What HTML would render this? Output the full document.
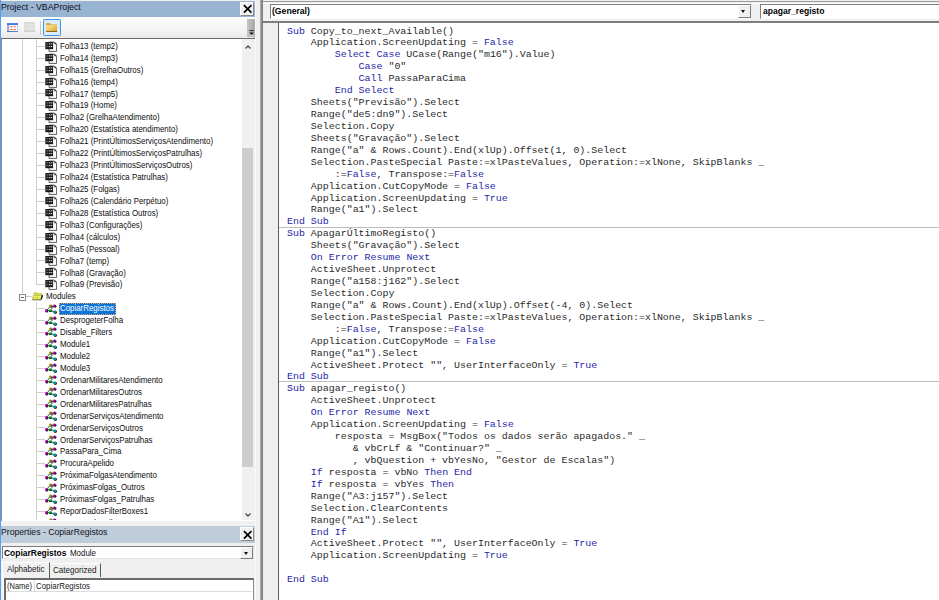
<!DOCTYPE html>
<html lang="pt"><head><meta charset="utf-8"><title>VBAProject</title>
<style>
html,body{margin:0;padding:0}
body{width:939px;height:600px;overflow:hidden;background:#f0f0f0;position:relative;font-family:"Liberation Sans",sans-serif;font-size:8.5px;color:#1a1a1a}
div,span,i{position:absolute;box-sizing:border-box}
.tx{white-space:pre;transform-origin:0 0;line-height:11px;height:11px}
#lb{left:0;top:0;width:1.3px;height:600px;background:#55a0f2}
#t1{left:1px;top:1px;width:254px;height:15.6px;background:#99b4d1}
.x{width:14.4px;height:14px;background:#f0f0f0;border-right:1px solid #8a8a8a;border-bottom:1px solid #8a8a8a;border-left:1px solid #fff;border-top:1px solid #fff}
.x svg{position:absolute;left:1.9px;top:1.4px;width:9.4px;height:9.8px}
#tb{left:1px;top:16.6px;width:254px;height:21px;background:linear-gradient(#fcfcfc,#f4f4f4 60%,#e9e9e9)}
#tree{left:0.8px;top:38.2px;width:254.2px;height:482.4px;background:#fff;border-top:1.6px solid #6a6a6a;border-left:1.2px solid #8a8a8a}
#rows{left:0;top:39px;width:242px;height:481.4px;overflow:hidden}
#rows .r{left:0;height:12px;width:242px;margin-top:-39px}
.selbg{left:59px;top:-0.5px;width:56.8px;height:12.2px;background:#0a74d9;outline:1px dotted #e8a060;outline-offset:-1px}
.r .ic{position:absolute;left:44.6px;top:0.2px;width:12px;height:12px}
.r .h{left:37px;top:5.2px;width:8px;height:1px;background:#cdcdcd}
#rows .pm{left:19px;top:3.2px;width:6.9px;height:6.7px;border:1px solid #8c8c8c;background:#fff}
#rows .pm:after{content:"";position:absolute;left:1.1px;top:1.9px;width:2.7px;height:0.9px;background:#666}
.vd{width:1px;background:#cdcdcd}
#sb{left:242px;top:39px;width:12.8px;height:481.4px;background:#f0f0f0}
#th{left:242.4px;top:148px;width:11px;height:319px;background:#cdcdcd}
#t2{left:1px;top:526px;width:254px;height:16.7px;background:#bfcddb}
#cb{left:1.5px;top:545.6px;width:252.6px;height:13.8px;background:#fff;border-top:1.2px solid #7a7a7a;border-left:1.2px solid #7a7a7a;border-bottom:1px solid #e6e6e6;border-right:1px solid #e6e6e6}
.dd{background:#f0f0f0;border-right:1px solid #7d7d7d;border-bottom:1px solid #7d7d7d;border-top:1px solid #fff;border-left:1px solid #fff}
.dd:after{content:"";position:absolute;left:50%;top:50%;margin:-1.3px 0 0 -2.9px;border:2.9px solid transparent;border-top:3px solid #111;border-bottom:0}
#code{left:279px;top:22.6px;width:660px;height:578px;background:#fff}
.cl{left:286.5px;height:12px;line-height:12px;font-family:"Liberation Mono",monospace;font-size:8.7px;white-space:pre;color:#2a2a2a;transform:scaleX(1.1444);transform-origin:0 0}
.cl b{font-weight:normal;color:#2626a8}
.sep{left:279px;width:660px;height:1.5px;background:#bdbdbd}
#cb .dd:after{margin-top:-0.5px}
</style></head><body>
<div id="lb"></div>
<div id="t1"></div>
<span class="tx" style="left:1.40px;top:1.90px;font-size:9.1px;color:#0c0c18;transform:scaleX(0.9627);">Project - VBAProject</span>
<div class="x" style="left:240px;top:1.6px"><svg viewBox="0 0 10 10"><path d="M1 1L9 9M9 1L1 9" stroke="#000" stroke-width="1.8" fill="none"/></svg></div>
<div id="tb">
 <svg style="position:absolute;left:6.2px;top:6.2px;width:11px;height:9.2px" viewBox="0 0 11 9"><rect x="0" y="0" width="11" height="9" fill="#fbfbff"/><rect x="0" y="0" width="11" height="1.9" fill="#4377e3"/><rect x="0" y="1.9" width="2.2" height="7.1" fill="#9db0d8"/><path d="M0 8.6h11" stroke="#2c4c94" stroke-width="0.9"/><path d="M10.7 1.9v7" stroke="#8aa0cc" stroke-width="0.6"/><path d="M3.3 3.7h2.4M6.7 3.7h2.2M3.3 6.4h2.4M6.7 6.4h2.2" stroke="#f0693a" stroke-width="1.1"/></svg>
 <svg style="position:absolute;left:23.2px;top:5.6px;width:11px;height:9.8px" viewBox="0 0 11 10"><rect x="0" y="0" width="11" height="10" fill="#dcdcdc"/><path d="M1.2 3.2h3M6 3.2h4M1.2 6.6h3M6 6.6h4M5.2 2v6" stroke="#ececec" stroke-width="0.9" fill="none"/><path d="M0 9.6h11" stroke="#c8c8c8" stroke-width="0.8"/></svg>
 <i style="left:39px;top:4px;width:1px;height:14px;background:#c8c8c8"></i>
 <div style="left:42.2px;top:2.5px;width:17.6px;height:17.2px;background:#dbe9f8;border:1.3px solid #3c96ea;border-radius:1.2px"></div>
 <svg style="position:absolute;left:44.7px;top:6.3px;width:11.4px;height:9.2px" viewBox="0 0 11.4 9.2"><linearGradient id="fg" x1="0" y1="0" x2="1" y2="1"><stop offset="0" stop-color="#fbe79a"/><stop offset="0.55" stop-color="#eec25a"/><stop offset="1" stop-color="#d39a2c"/></linearGradient><path d="M0 9v-8.2q0-0.8 0.8-0.8h3l1.2 1.4h6.4v7.6z" fill="#d6a53e"/><path d="M0 9v-7h11.4v7z" fill="url(#fg)"/><path d="M0 8.7h11.4" stroke="#6e5420" stroke-width="1"/></svg>
 <div style="left:246px;top:2px;width:9px;height:18px;background:linear-gradient(90deg,#c4c4c4,#a4a4a4);border-radius:0 2px 2px 0"></div>
 <svg style="position:absolute;left:247.8px;top:13px;width:5px;height:6px" viewBox="0 0 5 6"><path d="M0.3 0.6h4.4" stroke="#222" stroke-width="1"/><path d="M0.2 2.4h4.6L2.5 5z" fill="#111"/><path d="M0.8 5.6h4" stroke="#fff" stroke-width="0.6"/></svg>
</div>
<div id="tree"></div>
<div id="rows">
 <i class="vd" style="left:22.1px;top:0;height:253.9px"></i>
 <i class="vd" style="left:36.1px;top:0;height:246px"></i>
 <i class="vd" style="left:36.1px;top:263.2px;height:220px"></i>
<div class="r" style="top:40.55px"><i class="h"></i><svg class="ic" viewBox="0 0 12 12"><path d="M4 1.1h5.6l2 2v7.3h-7.6z" fill="#fff" stroke="#4a4a4a" stroke-width="0.9"/><path d="M9.4 1v2.2h2.2z" fill="#222"/><rect x="0.3" y="1" width="7.8" height="7.2" fill="#1c1c1c"/><path d="M1.2 2.9h2M1.2 5.6h2" stroke="#8a8a8a" stroke-width="0.8" fill="none"/><path d="M3.9 2.9h1.5M6 2.9h1.2M3.9 5.6h1.5M6 5.6h1.2" stroke="#fff" stroke-width="0.9" fill="none"/></svg><span class="tx t" style="left:59.60px;top:0.30px;font-size:8.7px;color:#0c0c0c;transform:scaleX(0.908);">Folha13 (temp2)</span></div>
<div class="r" style="top:52.48px"><i class="h"></i><svg class="ic" viewBox="0 0 12 12"><path d="M4 1.1h5.6l2 2v7.3h-7.6z" fill="#fff" stroke="#4a4a4a" stroke-width="0.9"/><path d="M9.4 1v2.2h2.2z" fill="#222"/><rect x="0.3" y="1" width="7.8" height="7.2" fill="#1c1c1c"/><path d="M1.2 2.9h2M1.2 5.6h2" stroke="#8a8a8a" stroke-width="0.8" fill="none"/><path d="M3.9 2.9h1.5M6 2.9h1.2M3.9 5.6h1.5M6 5.6h1.2" stroke="#fff" stroke-width="0.9" fill="none"/></svg><span class="tx t" style="left:59.60px;top:0.30px;font-size:8.7px;color:#0c0c0c;transform:scaleX(0.908);">Folha14 (temp3)</span></div>
<div class="r" style="top:64.41px"><i class="h"></i><svg class="ic" viewBox="0 0 12 12"><path d="M4 1.1h5.6l2 2v7.3h-7.6z" fill="#fff" stroke="#4a4a4a" stroke-width="0.9"/><path d="M9.4 1v2.2h2.2z" fill="#222"/><rect x="0.3" y="1" width="7.8" height="7.2" fill="#1c1c1c"/><path d="M1.2 2.9h2M1.2 5.6h2" stroke="#8a8a8a" stroke-width="0.8" fill="none"/><path d="M3.9 2.9h1.5M6 2.9h1.2M3.9 5.6h1.5M6 5.6h1.2" stroke="#fff" stroke-width="0.9" fill="none"/></svg><span class="tx t" style="left:59.60px;top:0.30px;font-size:8.7px;color:#0c0c0c;transform:scaleX(0.908);">Folha15 (GrelhaOutros)</span></div>
<div class="r" style="top:76.34px"><i class="h"></i><svg class="ic" viewBox="0 0 12 12"><path d="M4 1.1h5.6l2 2v7.3h-7.6z" fill="#fff" stroke="#4a4a4a" stroke-width="0.9"/><path d="M9.4 1v2.2h2.2z" fill="#222"/><rect x="0.3" y="1" width="7.8" height="7.2" fill="#1c1c1c"/><path d="M1.2 2.9h2M1.2 5.6h2" stroke="#8a8a8a" stroke-width="0.8" fill="none"/><path d="M3.9 2.9h1.5M6 2.9h1.2M3.9 5.6h1.5M6 5.6h1.2" stroke="#fff" stroke-width="0.9" fill="none"/></svg><span class="tx t" style="left:59.60px;top:0.30px;font-size:8.7px;color:#0c0c0c;transform:scaleX(0.908);">Folha16 (temp4)</span></div>
<div class="r" style="top:88.27px"><i class="h"></i><svg class="ic" viewBox="0 0 12 12"><path d="M4 1.1h5.6l2 2v7.3h-7.6z" fill="#fff" stroke="#4a4a4a" stroke-width="0.9"/><path d="M9.4 1v2.2h2.2z" fill="#222"/><rect x="0.3" y="1" width="7.8" height="7.2" fill="#1c1c1c"/><path d="M1.2 2.9h2M1.2 5.6h2" stroke="#8a8a8a" stroke-width="0.8" fill="none"/><path d="M3.9 2.9h1.5M6 2.9h1.2M3.9 5.6h1.5M6 5.6h1.2" stroke="#fff" stroke-width="0.9" fill="none"/></svg><span class="tx t" style="left:59.60px;top:0.30px;font-size:8.7px;color:#0c0c0c;transform:scaleX(0.908);">Folha17 (temp5)</span></div>
<div class="r" style="top:100.20px"><i class="h"></i><svg class="ic" viewBox="0 0 12 12"><path d="M4 1.1h5.6l2 2v7.3h-7.6z" fill="#fff" stroke="#4a4a4a" stroke-width="0.9"/><path d="M9.4 1v2.2h2.2z" fill="#222"/><rect x="0.3" y="1" width="7.8" height="7.2" fill="#1c1c1c"/><path d="M1.2 2.9h2M1.2 5.6h2" stroke="#8a8a8a" stroke-width="0.8" fill="none"/><path d="M3.9 2.9h1.5M6 2.9h1.2M3.9 5.6h1.5M6 5.6h1.2" stroke="#fff" stroke-width="0.9" fill="none"/></svg><span class="tx t" style="left:59.60px;top:0.30px;font-size:8.7px;color:#0c0c0c;transform:scaleX(0.908);">Folha19 (Home)</span></div>
<div class="r" style="top:112.13px"><i class="h"></i><svg class="ic" viewBox="0 0 12 12"><path d="M4 1.1h5.6l2 2v7.3h-7.6z" fill="#fff" stroke="#4a4a4a" stroke-width="0.9"/><path d="M9.4 1v2.2h2.2z" fill="#222"/><rect x="0.3" y="1" width="7.8" height="7.2" fill="#1c1c1c"/><path d="M1.2 2.9h2M1.2 5.6h2" stroke="#8a8a8a" stroke-width="0.8" fill="none"/><path d="M3.9 2.9h1.5M6 2.9h1.2M3.9 5.6h1.5M6 5.6h1.2" stroke="#fff" stroke-width="0.9" fill="none"/></svg><span class="tx t" style="left:59.60px;top:0.30px;font-size:8.7px;color:#0c0c0c;transform:scaleX(0.908);">Folha2 (GrelhaAtendimento)</span></div>
<div class="r" style="top:124.06px"><i class="h"></i><svg class="ic" viewBox="0 0 12 12"><path d="M4 1.1h5.6l2 2v7.3h-7.6z" fill="#fff" stroke="#4a4a4a" stroke-width="0.9"/><path d="M9.4 1v2.2h2.2z" fill="#222"/><rect x="0.3" y="1" width="7.8" height="7.2" fill="#1c1c1c"/><path d="M1.2 2.9h2M1.2 5.6h2" stroke="#8a8a8a" stroke-width="0.8" fill="none"/><path d="M3.9 2.9h1.5M6 2.9h1.2M3.9 5.6h1.5M6 5.6h1.2" stroke="#fff" stroke-width="0.9" fill="none"/></svg><span class="tx t" style="left:59.60px;top:0.30px;font-size:8.7px;color:#0c0c0c;transform:scaleX(0.908);">Folha20 (Estatística atendimento)</span></div>
<div class="r" style="top:135.99px"><i class="h"></i><svg class="ic" viewBox="0 0 12 12"><path d="M4 1.1h5.6l2 2v7.3h-7.6z" fill="#fff" stroke="#4a4a4a" stroke-width="0.9"/><path d="M9.4 1v2.2h2.2z" fill="#222"/><rect x="0.3" y="1" width="7.8" height="7.2" fill="#1c1c1c"/><path d="M1.2 2.9h2M1.2 5.6h2" stroke="#8a8a8a" stroke-width="0.8" fill="none"/><path d="M3.9 2.9h1.5M6 2.9h1.2M3.9 5.6h1.5M6 5.6h1.2" stroke="#fff" stroke-width="0.9" fill="none"/></svg><span class="tx t" style="left:59.60px;top:0.30px;font-size:8.7px;color:#0c0c0c;transform:scaleX(0.908);">Folha21 (PrintÚltimosServiçosAtendimento)</span></div>
<div class="r" style="top:147.92px"><i class="h"></i><svg class="ic" viewBox="0 0 12 12"><path d="M4 1.1h5.6l2 2v7.3h-7.6z" fill="#fff" stroke="#4a4a4a" stroke-width="0.9"/><path d="M9.4 1v2.2h2.2z" fill="#222"/><rect x="0.3" y="1" width="7.8" height="7.2" fill="#1c1c1c"/><path d="M1.2 2.9h2M1.2 5.6h2" stroke="#8a8a8a" stroke-width="0.8" fill="none"/><path d="M3.9 2.9h1.5M6 2.9h1.2M3.9 5.6h1.5M6 5.6h1.2" stroke="#fff" stroke-width="0.9" fill="none"/></svg><span class="tx t" style="left:59.60px;top:0.30px;font-size:8.7px;color:#0c0c0c;transform:scaleX(0.908);">Folha22 (PrintÚltimosServiçosPatrulhas)</span></div>
<div class="r" style="top:159.85px"><i class="h"></i><svg class="ic" viewBox="0 0 12 12"><path d="M4 1.1h5.6l2 2v7.3h-7.6z" fill="#fff" stroke="#4a4a4a" stroke-width="0.9"/><path d="M9.4 1v2.2h2.2z" fill="#222"/><rect x="0.3" y="1" width="7.8" height="7.2" fill="#1c1c1c"/><path d="M1.2 2.9h2M1.2 5.6h2" stroke="#8a8a8a" stroke-width="0.8" fill="none"/><path d="M3.9 2.9h1.5M6 2.9h1.2M3.9 5.6h1.5M6 5.6h1.2" stroke="#fff" stroke-width="0.9" fill="none"/></svg><span class="tx t" style="left:59.60px;top:0.30px;font-size:8.7px;color:#0c0c0c;transform:scaleX(0.908);">Folha23 (PrintÚltimosServiçosOutros)</span></div>
<div class="r" style="top:171.78px"><i class="h"></i><svg class="ic" viewBox="0 0 12 12"><path d="M4 1.1h5.6l2 2v7.3h-7.6z" fill="#fff" stroke="#4a4a4a" stroke-width="0.9"/><path d="M9.4 1v2.2h2.2z" fill="#222"/><rect x="0.3" y="1" width="7.8" height="7.2" fill="#1c1c1c"/><path d="M1.2 2.9h2M1.2 5.6h2" stroke="#8a8a8a" stroke-width="0.8" fill="none"/><path d="M3.9 2.9h1.5M6 2.9h1.2M3.9 5.6h1.5M6 5.6h1.2" stroke="#fff" stroke-width="0.9" fill="none"/></svg><span class="tx t" style="left:59.60px;top:0.30px;font-size:8.7px;color:#0c0c0c;transform:scaleX(0.908);">Folha24 (Estatística Patrulhas)</span></div>
<div class="r" style="top:183.71px"><i class="h"></i><svg class="ic" viewBox="0 0 12 12"><path d="M4 1.1h5.6l2 2v7.3h-7.6z" fill="#fff" stroke="#4a4a4a" stroke-width="0.9"/><path d="M9.4 1v2.2h2.2z" fill="#222"/><rect x="0.3" y="1" width="7.8" height="7.2" fill="#1c1c1c"/><path d="M1.2 2.9h2M1.2 5.6h2" stroke="#8a8a8a" stroke-width="0.8" fill="none"/><path d="M3.9 2.9h1.5M6 2.9h1.2M3.9 5.6h1.5M6 5.6h1.2" stroke="#fff" stroke-width="0.9" fill="none"/></svg><span class="tx t" style="left:59.60px;top:0.30px;font-size:8.7px;color:#0c0c0c;transform:scaleX(0.908);">Folha25 (Folgas)</span></div>
<div class="r" style="top:195.64px"><i class="h"></i><svg class="ic" viewBox="0 0 12 12"><path d="M4 1.1h5.6l2 2v7.3h-7.6z" fill="#fff" stroke="#4a4a4a" stroke-width="0.9"/><path d="M9.4 1v2.2h2.2z" fill="#222"/><rect x="0.3" y="1" width="7.8" height="7.2" fill="#1c1c1c"/><path d="M1.2 2.9h2M1.2 5.6h2" stroke="#8a8a8a" stroke-width="0.8" fill="none"/><path d="M3.9 2.9h1.5M6 2.9h1.2M3.9 5.6h1.5M6 5.6h1.2" stroke="#fff" stroke-width="0.9" fill="none"/></svg><span class="tx t" style="left:59.60px;top:0.30px;font-size:8.7px;color:#0c0c0c;transform:scaleX(0.908);">Folha26 (Calendário Perpétuo)</span></div>
<div class="r" style="top:207.57px"><i class="h"></i><svg class="ic" viewBox="0 0 12 12"><path d="M4 1.1h5.6l2 2v7.3h-7.6z" fill="#fff" stroke="#4a4a4a" stroke-width="0.9"/><path d="M9.4 1v2.2h2.2z" fill="#222"/><rect x="0.3" y="1" width="7.8" height="7.2" fill="#1c1c1c"/><path d="M1.2 2.9h2M1.2 5.6h2" stroke="#8a8a8a" stroke-width="0.8" fill="none"/><path d="M3.9 2.9h1.5M6 2.9h1.2M3.9 5.6h1.5M6 5.6h1.2" stroke="#fff" stroke-width="0.9" fill="none"/></svg><span class="tx t" style="left:59.60px;top:0.30px;font-size:8.7px;color:#0c0c0c;transform:scaleX(0.908);">Folha28 (Estatística Outros)</span></div>
<div class="r" style="top:219.50px"><i class="h"></i><svg class="ic" viewBox="0 0 12 12"><path d="M4 1.1h5.6l2 2v7.3h-7.6z" fill="#fff" stroke="#4a4a4a" stroke-width="0.9"/><path d="M9.4 1v2.2h2.2z" fill="#222"/><rect x="0.3" y="1" width="7.8" height="7.2" fill="#1c1c1c"/><path d="M1.2 2.9h2M1.2 5.6h2" stroke="#8a8a8a" stroke-width="0.8" fill="none"/><path d="M3.9 2.9h1.5M6 2.9h1.2M3.9 5.6h1.5M6 5.6h1.2" stroke="#fff" stroke-width="0.9" fill="none"/></svg><span class="tx t" style="left:59.60px;top:0.30px;font-size:8.7px;color:#0c0c0c;transform:scaleX(0.908);">Folha3 (Configurações)</span></div>
<div class="r" style="top:231.43px"><i class="h"></i><svg class="ic" viewBox="0 0 12 12"><path d="M4 1.1h5.6l2 2v7.3h-7.6z" fill="#fff" stroke="#4a4a4a" stroke-width="0.9"/><path d="M9.4 1v2.2h2.2z" fill="#222"/><rect x="0.3" y="1" width="7.8" height="7.2" fill="#1c1c1c"/><path d="M1.2 2.9h2M1.2 5.6h2" stroke="#8a8a8a" stroke-width="0.8" fill="none"/><path d="M3.9 2.9h1.5M6 2.9h1.2M3.9 5.6h1.5M6 5.6h1.2" stroke="#fff" stroke-width="0.9" fill="none"/></svg><span class="tx t" style="left:59.60px;top:0.30px;font-size:8.7px;color:#0c0c0c;transform:scaleX(0.908);">Folha4 (cálculos)</span></div>
<div class="r" style="top:243.36px"><i class="h"></i><svg class="ic" viewBox="0 0 12 12"><path d="M4 1.1h5.6l2 2v7.3h-7.6z" fill="#fff" stroke="#4a4a4a" stroke-width="0.9"/><path d="M9.4 1v2.2h2.2z" fill="#222"/><rect x="0.3" y="1" width="7.8" height="7.2" fill="#1c1c1c"/><path d="M1.2 2.9h2M1.2 5.6h2" stroke="#8a8a8a" stroke-width="0.8" fill="none"/><path d="M3.9 2.9h1.5M6 2.9h1.2M3.9 5.6h1.5M6 5.6h1.2" stroke="#fff" stroke-width="0.9" fill="none"/></svg><span class="tx t" style="left:59.60px;top:0.30px;font-size:8.7px;color:#0c0c0c;transform:scaleX(0.908);">Folha5 (Pessoal)</span></div>
<div class="r" style="top:255.29px"><i class="h"></i><svg class="ic" viewBox="0 0 12 12"><path d="M4 1.1h5.6l2 2v7.3h-7.6z" fill="#fff" stroke="#4a4a4a" stroke-width="0.9"/><path d="M9.4 1v2.2h2.2z" fill="#222"/><rect x="0.3" y="1" width="7.8" height="7.2" fill="#1c1c1c"/><path d="M1.2 2.9h2M1.2 5.6h2" stroke="#8a8a8a" stroke-width="0.8" fill="none"/><path d="M3.9 2.9h1.5M6 2.9h1.2M3.9 5.6h1.5M6 5.6h1.2" stroke="#fff" stroke-width="0.9" fill="none"/></svg><span class="tx t" style="left:59.60px;top:0.30px;font-size:8.7px;color:#0c0c0c;transform:scaleX(0.908);">Folha7 (temp)</span></div>
<div class="r" style="top:267.22px"><i class="h"></i><svg class="ic" viewBox="0 0 12 12"><path d="M4 1.1h5.6l2 2v7.3h-7.6z" fill="#fff" stroke="#4a4a4a" stroke-width="0.9"/><path d="M9.4 1v2.2h2.2z" fill="#222"/><rect x="0.3" y="1" width="7.8" height="7.2" fill="#1c1c1c"/><path d="M1.2 2.9h2M1.2 5.6h2" stroke="#8a8a8a" stroke-width="0.8" fill="none"/><path d="M3.9 2.9h1.5M6 2.9h1.2M3.9 5.6h1.5M6 5.6h1.2" stroke="#fff" stroke-width="0.9" fill="none"/></svg><span class="tx t" style="left:59.60px;top:0.30px;font-size:8.7px;color:#0c0c0c;transform:scaleX(0.908);">Folha8 (Gravação)</span></div>
<div class="r" style="top:279.15px"><i class="h"></i><svg class="ic" viewBox="0 0 12 12"><path d="M4 1.1h5.6l2 2v7.3h-7.6z" fill="#fff" stroke="#4a4a4a" stroke-width="0.9"/><path d="M9.4 1v2.2h2.2z" fill="#222"/><rect x="0.3" y="1" width="7.8" height="7.2" fill="#1c1c1c"/><path d="M1.2 2.9h2M1.2 5.6h2" stroke="#8a8a8a" stroke-width="0.8" fill="none"/><path d="M3.9 2.9h1.5M6 2.9h1.2M3.9 5.6h1.5M6 5.6h1.2" stroke="#fff" stroke-width="0.9" fill="none"/></svg><span class="tx t" style="left:59.60px;top:0.30px;font-size:8.7px;color:#0c0c0c;transform:scaleX(0.908);">Folha9 (Previsão)</span></div>
<div class="r" style="top:291.08px"><i class="h" style="left:26px;width:6px"></i><i class="pm"></i><svg class="ic" style="left:31.8px;top:0.4px;width:11px;height:11px" viewBox="0 0 11 11"><path d="M1.2 3.2l0.8-1.4h3l0.8 1h4v2.4" fill="#e4e455" stroke="#b8b84a" stroke-width="0.7"/><path d="M0.4 8.6l1-4.2h8.8l-1.2 4.2z" fill="#f0f060" stroke="#a0a040" stroke-width="0.7"/><path d="M9.2 8.4l1.3-4.2" stroke="#111" stroke-width="1.3"/><path d="M0.6 8.9h8.6" stroke="#555" stroke-width="0.7"/><path d="M2.6 3h2.6M2.4 6.6h4.6" stroke="#c4c040" stroke-width="0.9"/></svg><span class="tx t" style="left:46.00px;top:0.30px;font-size:8.7px;color:#0c0c0c;transform:scaleX(0.908);">Modules</span></div>
<div class="r" style="top:303.01px"><i class="h"></i><svg class="ic" style="top:0.6px" viewBox="0 0 12 12"><path d="M1.4 6.5L5.8 1.8M1.4 6.5L5 6.5M5 6.5L9.6 1.8M5 6.5L10 7.9" stroke="#2a2a2a" stroke-width="0.85" fill="none"/><g fill="#000"><ellipse cx="6.2" cy="2.3" rx="1.4" ry="1.4"/><ellipse cx="10" cy="2.3" rx="1.4" ry="1.4"/><ellipse cx="1.8" cy="7" rx="1.4" ry="1.6"/><ellipse cx="5.3" cy="7" rx="1.6" ry="1.1"/><ellipse cx="10.3" cy="8.4" rx="1.6" ry="1.3"/></g><ellipse cx="5.7" cy="1.8" rx="1.35" ry="1.35" fill="#8c8c00"/><ellipse cx="9.5" cy="1.8" rx="1.35" ry="1.35" fill="#a800a8"/><ellipse cx="1.35" cy="6.5" rx="1.35" ry="1.6" fill="#b000b0"/><ellipse cx="4.8" cy="6.5" rx="1.6" ry="1.1" fill="#00b020"/><ellipse cx="9.8" cy="7.9" rx="1.6" ry="1.3" fill="#009090"/></svg><i class="selbg"></i><span class="tx t" style="left:59.60px;top:0.30px;font-size:8.7px;color:#fff;transform:scaleX(0.908);">CopiarRegistos</span></div>
<div class="r" style="top:314.94px"><i class="h"></i><svg class="ic" style="top:0.6px" viewBox="0 0 12 12"><path d="M1.4 6.5L5.8 1.8M1.4 6.5L5 6.5M5 6.5L9.6 1.8M5 6.5L10 7.9" stroke="#2a2a2a" stroke-width="0.85" fill="none"/><g fill="#000"><ellipse cx="6.2" cy="2.3" rx="1.4" ry="1.4"/><ellipse cx="10" cy="2.3" rx="1.4" ry="1.4"/><ellipse cx="1.8" cy="7" rx="1.4" ry="1.6"/><ellipse cx="5.3" cy="7" rx="1.6" ry="1.1"/><ellipse cx="10.3" cy="8.4" rx="1.6" ry="1.3"/></g><ellipse cx="5.7" cy="1.8" rx="1.35" ry="1.35" fill="#8c8c00"/><ellipse cx="9.5" cy="1.8" rx="1.35" ry="1.35" fill="#a800a8"/><ellipse cx="1.35" cy="6.5" rx="1.35" ry="1.6" fill="#b000b0"/><ellipse cx="4.8" cy="6.5" rx="1.6" ry="1.1" fill="#00b020"/><ellipse cx="9.8" cy="7.9" rx="1.6" ry="1.3" fill="#009090"/></svg><span class="tx t" style="left:59.60px;top:0.30px;font-size:8.7px;color:#0c0c0c;transform:scaleX(0.908);">DesprogeterFolha</span></div>
<div class="r" style="top:326.87px"><i class="h"></i><svg class="ic" style="top:0.6px" viewBox="0 0 12 12"><path d="M1.4 6.5L5.8 1.8M1.4 6.5L5 6.5M5 6.5L9.6 1.8M5 6.5L10 7.9" stroke="#2a2a2a" stroke-width="0.85" fill="none"/><g fill="#000"><ellipse cx="6.2" cy="2.3" rx="1.4" ry="1.4"/><ellipse cx="10" cy="2.3" rx="1.4" ry="1.4"/><ellipse cx="1.8" cy="7" rx="1.4" ry="1.6"/><ellipse cx="5.3" cy="7" rx="1.6" ry="1.1"/><ellipse cx="10.3" cy="8.4" rx="1.6" ry="1.3"/></g><ellipse cx="5.7" cy="1.8" rx="1.35" ry="1.35" fill="#8c8c00"/><ellipse cx="9.5" cy="1.8" rx="1.35" ry="1.35" fill="#a800a8"/><ellipse cx="1.35" cy="6.5" rx="1.35" ry="1.6" fill="#b000b0"/><ellipse cx="4.8" cy="6.5" rx="1.6" ry="1.1" fill="#00b020"/><ellipse cx="9.8" cy="7.9" rx="1.6" ry="1.3" fill="#009090"/></svg><span class="tx t" style="left:59.60px;top:0.30px;font-size:8.7px;color:#0c0c0c;transform:scaleX(0.908);">Disable_Filters</span></div>
<div class="r" style="top:338.80px"><i class="h"></i><svg class="ic" style="top:0.6px" viewBox="0 0 12 12"><path d="M1.4 6.5L5.8 1.8M1.4 6.5L5 6.5M5 6.5L9.6 1.8M5 6.5L10 7.9" stroke="#2a2a2a" stroke-width="0.85" fill="none"/><g fill="#000"><ellipse cx="6.2" cy="2.3" rx="1.4" ry="1.4"/><ellipse cx="10" cy="2.3" rx="1.4" ry="1.4"/><ellipse cx="1.8" cy="7" rx="1.4" ry="1.6"/><ellipse cx="5.3" cy="7" rx="1.6" ry="1.1"/><ellipse cx="10.3" cy="8.4" rx="1.6" ry="1.3"/></g><ellipse cx="5.7" cy="1.8" rx="1.35" ry="1.35" fill="#8c8c00"/><ellipse cx="9.5" cy="1.8" rx="1.35" ry="1.35" fill="#a800a8"/><ellipse cx="1.35" cy="6.5" rx="1.35" ry="1.6" fill="#b000b0"/><ellipse cx="4.8" cy="6.5" rx="1.6" ry="1.1" fill="#00b020"/><ellipse cx="9.8" cy="7.9" rx="1.6" ry="1.3" fill="#009090"/></svg><span class="tx t" style="left:59.60px;top:0.30px;font-size:8.7px;color:#0c0c0c;transform:scaleX(0.908);">Module1</span></div>
<div class="r" style="top:350.73px"><i class="h"></i><svg class="ic" style="top:0.6px" viewBox="0 0 12 12"><path d="M1.4 6.5L5.8 1.8M1.4 6.5L5 6.5M5 6.5L9.6 1.8M5 6.5L10 7.9" stroke="#2a2a2a" stroke-width="0.85" fill="none"/><g fill="#000"><ellipse cx="6.2" cy="2.3" rx="1.4" ry="1.4"/><ellipse cx="10" cy="2.3" rx="1.4" ry="1.4"/><ellipse cx="1.8" cy="7" rx="1.4" ry="1.6"/><ellipse cx="5.3" cy="7" rx="1.6" ry="1.1"/><ellipse cx="10.3" cy="8.4" rx="1.6" ry="1.3"/></g><ellipse cx="5.7" cy="1.8" rx="1.35" ry="1.35" fill="#8c8c00"/><ellipse cx="9.5" cy="1.8" rx="1.35" ry="1.35" fill="#a800a8"/><ellipse cx="1.35" cy="6.5" rx="1.35" ry="1.6" fill="#b000b0"/><ellipse cx="4.8" cy="6.5" rx="1.6" ry="1.1" fill="#00b020"/><ellipse cx="9.8" cy="7.9" rx="1.6" ry="1.3" fill="#009090"/></svg><span class="tx t" style="left:59.60px;top:0.30px;font-size:8.7px;color:#0c0c0c;transform:scaleX(0.908);">Module2</span></div>
<div class="r" style="top:362.66px"><i class="h"></i><svg class="ic" style="top:0.6px" viewBox="0 0 12 12"><path d="M1.4 6.5L5.8 1.8M1.4 6.5L5 6.5M5 6.5L9.6 1.8M5 6.5L10 7.9" stroke="#2a2a2a" stroke-width="0.85" fill="none"/><g fill="#000"><ellipse cx="6.2" cy="2.3" rx="1.4" ry="1.4"/><ellipse cx="10" cy="2.3" rx="1.4" ry="1.4"/><ellipse cx="1.8" cy="7" rx="1.4" ry="1.6"/><ellipse cx="5.3" cy="7" rx="1.6" ry="1.1"/><ellipse cx="10.3" cy="8.4" rx="1.6" ry="1.3"/></g><ellipse cx="5.7" cy="1.8" rx="1.35" ry="1.35" fill="#8c8c00"/><ellipse cx="9.5" cy="1.8" rx="1.35" ry="1.35" fill="#a800a8"/><ellipse cx="1.35" cy="6.5" rx="1.35" ry="1.6" fill="#b000b0"/><ellipse cx="4.8" cy="6.5" rx="1.6" ry="1.1" fill="#00b020"/><ellipse cx="9.8" cy="7.9" rx="1.6" ry="1.3" fill="#009090"/></svg><span class="tx t" style="left:59.60px;top:0.30px;font-size:8.7px;color:#0c0c0c;transform:scaleX(0.908);">Module3</span></div>
<div class="r" style="top:374.59px"><i class="h"></i><svg class="ic" style="top:0.6px" viewBox="0 0 12 12"><path d="M1.4 6.5L5.8 1.8M1.4 6.5L5 6.5M5 6.5L9.6 1.8M5 6.5L10 7.9" stroke="#2a2a2a" stroke-width="0.85" fill="none"/><g fill="#000"><ellipse cx="6.2" cy="2.3" rx="1.4" ry="1.4"/><ellipse cx="10" cy="2.3" rx="1.4" ry="1.4"/><ellipse cx="1.8" cy="7" rx="1.4" ry="1.6"/><ellipse cx="5.3" cy="7" rx="1.6" ry="1.1"/><ellipse cx="10.3" cy="8.4" rx="1.6" ry="1.3"/></g><ellipse cx="5.7" cy="1.8" rx="1.35" ry="1.35" fill="#8c8c00"/><ellipse cx="9.5" cy="1.8" rx="1.35" ry="1.35" fill="#a800a8"/><ellipse cx="1.35" cy="6.5" rx="1.35" ry="1.6" fill="#b000b0"/><ellipse cx="4.8" cy="6.5" rx="1.6" ry="1.1" fill="#00b020"/><ellipse cx="9.8" cy="7.9" rx="1.6" ry="1.3" fill="#009090"/></svg><span class="tx t" style="left:59.60px;top:0.30px;font-size:8.7px;color:#0c0c0c;transform:scaleX(0.908);">OrdenarMilitaresAtendimento</span></div>
<div class="r" style="top:386.52px"><i class="h"></i><svg class="ic" style="top:0.6px" viewBox="0 0 12 12"><path d="M1.4 6.5L5.8 1.8M1.4 6.5L5 6.5M5 6.5L9.6 1.8M5 6.5L10 7.9" stroke="#2a2a2a" stroke-width="0.85" fill="none"/><g fill="#000"><ellipse cx="6.2" cy="2.3" rx="1.4" ry="1.4"/><ellipse cx="10" cy="2.3" rx="1.4" ry="1.4"/><ellipse cx="1.8" cy="7" rx="1.4" ry="1.6"/><ellipse cx="5.3" cy="7" rx="1.6" ry="1.1"/><ellipse cx="10.3" cy="8.4" rx="1.6" ry="1.3"/></g><ellipse cx="5.7" cy="1.8" rx="1.35" ry="1.35" fill="#8c8c00"/><ellipse cx="9.5" cy="1.8" rx="1.35" ry="1.35" fill="#a800a8"/><ellipse cx="1.35" cy="6.5" rx="1.35" ry="1.6" fill="#b000b0"/><ellipse cx="4.8" cy="6.5" rx="1.6" ry="1.1" fill="#00b020"/><ellipse cx="9.8" cy="7.9" rx="1.6" ry="1.3" fill="#009090"/></svg><span class="tx t" style="left:59.60px;top:0.30px;font-size:8.7px;color:#0c0c0c;transform:scaleX(0.908);">OrdenarMilitaresOutros</span></div>
<div class="r" style="top:398.45px"><i class="h"></i><svg class="ic" style="top:0.6px" viewBox="0 0 12 12"><path d="M1.4 6.5L5.8 1.8M1.4 6.5L5 6.5M5 6.5L9.6 1.8M5 6.5L10 7.9" stroke="#2a2a2a" stroke-width="0.85" fill="none"/><g fill="#000"><ellipse cx="6.2" cy="2.3" rx="1.4" ry="1.4"/><ellipse cx="10" cy="2.3" rx="1.4" ry="1.4"/><ellipse cx="1.8" cy="7" rx="1.4" ry="1.6"/><ellipse cx="5.3" cy="7" rx="1.6" ry="1.1"/><ellipse cx="10.3" cy="8.4" rx="1.6" ry="1.3"/></g><ellipse cx="5.7" cy="1.8" rx="1.35" ry="1.35" fill="#8c8c00"/><ellipse cx="9.5" cy="1.8" rx="1.35" ry="1.35" fill="#a800a8"/><ellipse cx="1.35" cy="6.5" rx="1.35" ry="1.6" fill="#b000b0"/><ellipse cx="4.8" cy="6.5" rx="1.6" ry="1.1" fill="#00b020"/><ellipse cx="9.8" cy="7.9" rx="1.6" ry="1.3" fill="#009090"/></svg><span class="tx t" style="left:59.60px;top:0.30px;font-size:8.7px;color:#0c0c0c;transform:scaleX(0.908);">OrdenarMilitaresPatrulhas</span></div>
<div class="r" style="top:410.38px"><i class="h"></i><svg class="ic" style="top:0.6px" viewBox="0 0 12 12"><path d="M1.4 6.5L5.8 1.8M1.4 6.5L5 6.5M5 6.5L9.6 1.8M5 6.5L10 7.9" stroke="#2a2a2a" stroke-width="0.85" fill="none"/><g fill="#000"><ellipse cx="6.2" cy="2.3" rx="1.4" ry="1.4"/><ellipse cx="10" cy="2.3" rx="1.4" ry="1.4"/><ellipse cx="1.8" cy="7" rx="1.4" ry="1.6"/><ellipse cx="5.3" cy="7" rx="1.6" ry="1.1"/><ellipse cx="10.3" cy="8.4" rx="1.6" ry="1.3"/></g><ellipse cx="5.7" cy="1.8" rx="1.35" ry="1.35" fill="#8c8c00"/><ellipse cx="9.5" cy="1.8" rx="1.35" ry="1.35" fill="#a800a8"/><ellipse cx="1.35" cy="6.5" rx="1.35" ry="1.6" fill="#b000b0"/><ellipse cx="4.8" cy="6.5" rx="1.6" ry="1.1" fill="#00b020"/><ellipse cx="9.8" cy="7.9" rx="1.6" ry="1.3" fill="#009090"/></svg><span class="tx t" style="left:59.60px;top:0.30px;font-size:8.7px;color:#0c0c0c;transform:scaleX(0.908);">OrdenarServiçosAtendimento</span></div>
<div class="r" style="top:422.31px"><i class="h"></i><svg class="ic" style="top:0.6px" viewBox="0 0 12 12"><path d="M1.4 6.5L5.8 1.8M1.4 6.5L5 6.5M5 6.5L9.6 1.8M5 6.5L10 7.9" stroke="#2a2a2a" stroke-width="0.85" fill="none"/><g fill="#000"><ellipse cx="6.2" cy="2.3" rx="1.4" ry="1.4"/><ellipse cx="10" cy="2.3" rx="1.4" ry="1.4"/><ellipse cx="1.8" cy="7" rx="1.4" ry="1.6"/><ellipse cx="5.3" cy="7" rx="1.6" ry="1.1"/><ellipse cx="10.3" cy="8.4" rx="1.6" ry="1.3"/></g><ellipse cx="5.7" cy="1.8" rx="1.35" ry="1.35" fill="#8c8c00"/><ellipse cx="9.5" cy="1.8" rx="1.35" ry="1.35" fill="#a800a8"/><ellipse cx="1.35" cy="6.5" rx="1.35" ry="1.6" fill="#b000b0"/><ellipse cx="4.8" cy="6.5" rx="1.6" ry="1.1" fill="#00b020"/><ellipse cx="9.8" cy="7.9" rx="1.6" ry="1.3" fill="#009090"/></svg><span class="tx t" style="left:59.60px;top:0.30px;font-size:8.7px;color:#0c0c0c;transform:scaleX(0.908);">OrdenarServiçosOutros</span></div>
<div class="r" style="top:434.24px"><i class="h"></i><svg class="ic" style="top:0.6px" viewBox="0 0 12 12"><path d="M1.4 6.5L5.8 1.8M1.4 6.5L5 6.5M5 6.5L9.6 1.8M5 6.5L10 7.9" stroke="#2a2a2a" stroke-width="0.85" fill="none"/><g fill="#000"><ellipse cx="6.2" cy="2.3" rx="1.4" ry="1.4"/><ellipse cx="10" cy="2.3" rx="1.4" ry="1.4"/><ellipse cx="1.8" cy="7" rx="1.4" ry="1.6"/><ellipse cx="5.3" cy="7" rx="1.6" ry="1.1"/><ellipse cx="10.3" cy="8.4" rx="1.6" ry="1.3"/></g><ellipse cx="5.7" cy="1.8" rx="1.35" ry="1.35" fill="#8c8c00"/><ellipse cx="9.5" cy="1.8" rx="1.35" ry="1.35" fill="#a800a8"/><ellipse cx="1.35" cy="6.5" rx="1.35" ry="1.6" fill="#b000b0"/><ellipse cx="4.8" cy="6.5" rx="1.6" ry="1.1" fill="#00b020"/><ellipse cx="9.8" cy="7.9" rx="1.6" ry="1.3" fill="#009090"/></svg><span class="tx t" style="left:59.60px;top:0.30px;font-size:8.7px;color:#0c0c0c;transform:scaleX(0.908);">OrdenarServiçosPatrulhas</span></div>
<div class="r" style="top:446.17px"><i class="h"></i><svg class="ic" style="top:0.6px" viewBox="0 0 12 12"><path d="M1.4 6.5L5.8 1.8M1.4 6.5L5 6.5M5 6.5L9.6 1.8M5 6.5L10 7.9" stroke="#2a2a2a" stroke-width="0.85" fill="none"/><g fill="#000"><ellipse cx="6.2" cy="2.3" rx="1.4" ry="1.4"/><ellipse cx="10" cy="2.3" rx="1.4" ry="1.4"/><ellipse cx="1.8" cy="7" rx="1.4" ry="1.6"/><ellipse cx="5.3" cy="7" rx="1.6" ry="1.1"/><ellipse cx="10.3" cy="8.4" rx="1.6" ry="1.3"/></g><ellipse cx="5.7" cy="1.8" rx="1.35" ry="1.35" fill="#8c8c00"/><ellipse cx="9.5" cy="1.8" rx="1.35" ry="1.35" fill="#a800a8"/><ellipse cx="1.35" cy="6.5" rx="1.35" ry="1.6" fill="#b000b0"/><ellipse cx="4.8" cy="6.5" rx="1.6" ry="1.1" fill="#00b020"/><ellipse cx="9.8" cy="7.9" rx="1.6" ry="1.3" fill="#009090"/></svg><span class="tx t" style="left:59.60px;top:0.30px;font-size:8.7px;color:#0c0c0c;transform:scaleX(0.908);">PassaPara_Cima</span></div>
<div class="r" style="top:458.10px"><i class="h"></i><svg class="ic" style="top:0.6px" viewBox="0 0 12 12"><path d="M1.4 6.5L5.8 1.8M1.4 6.5L5 6.5M5 6.5L9.6 1.8M5 6.5L10 7.9" stroke="#2a2a2a" stroke-width="0.85" fill="none"/><g fill="#000"><ellipse cx="6.2" cy="2.3" rx="1.4" ry="1.4"/><ellipse cx="10" cy="2.3" rx="1.4" ry="1.4"/><ellipse cx="1.8" cy="7" rx="1.4" ry="1.6"/><ellipse cx="5.3" cy="7" rx="1.6" ry="1.1"/><ellipse cx="10.3" cy="8.4" rx="1.6" ry="1.3"/></g><ellipse cx="5.7" cy="1.8" rx="1.35" ry="1.35" fill="#8c8c00"/><ellipse cx="9.5" cy="1.8" rx="1.35" ry="1.35" fill="#a800a8"/><ellipse cx="1.35" cy="6.5" rx="1.35" ry="1.6" fill="#b000b0"/><ellipse cx="4.8" cy="6.5" rx="1.6" ry="1.1" fill="#00b020"/><ellipse cx="9.8" cy="7.9" rx="1.6" ry="1.3" fill="#009090"/></svg><span class="tx t" style="left:59.60px;top:0.30px;font-size:8.7px;color:#0c0c0c;transform:scaleX(0.908);">ProcuraApelido</span></div>
<div class="r" style="top:470.03px"><i class="h"></i><svg class="ic" style="top:0.6px" viewBox="0 0 12 12"><path d="M1.4 6.5L5.8 1.8M1.4 6.5L5 6.5M5 6.5L9.6 1.8M5 6.5L10 7.9" stroke="#2a2a2a" stroke-width="0.85" fill="none"/><g fill="#000"><ellipse cx="6.2" cy="2.3" rx="1.4" ry="1.4"/><ellipse cx="10" cy="2.3" rx="1.4" ry="1.4"/><ellipse cx="1.8" cy="7" rx="1.4" ry="1.6"/><ellipse cx="5.3" cy="7" rx="1.6" ry="1.1"/><ellipse cx="10.3" cy="8.4" rx="1.6" ry="1.3"/></g><ellipse cx="5.7" cy="1.8" rx="1.35" ry="1.35" fill="#8c8c00"/><ellipse cx="9.5" cy="1.8" rx="1.35" ry="1.35" fill="#a800a8"/><ellipse cx="1.35" cy="6.5" rx="1.35" ry="1.6" fill="#b000b0"/><ellipse cx="4.8" cy="6.5" rx="1.6" ry="1.1" fill="#00b020"/><ellipse cx="9.8" cy="7.9" rx="1.6" ry="1.3" fill="#009090"/></svg><span class="tx t" style="left:59.60px;top:0.30px;font-size:8.7px;color:#0c0c0c;transform:scaleX(0.908);">PróximaFolgasAtendimento</span></div>
<div class="r" style="top:481.96px"><i class="h"></i><svg class="ic" style="top:0.6px" viewBox="0 0 12 12"><path d="M1.4 6.5L5.8 1.8M1.4 6.5L5 6.5M5 6.5L9.6 1.8M5 6.5L10 7.9" stroke="#2a2a2a" stroke-width="0.85" fill="none"/><g fill="#000"><ellipse cx="6.2" cy="2.3" rx="1.4" ry="1.4"/><ellipse cx="10" cy="2.3" rx="1.4" ry="1.4"/><ellipse cx="1.8" cy="7" rx="1.4" ry="1.6"/><ellipse cx="5.3" cy="7" rx="1.6" ry="1.1"/><ellipse cx="10.3" cy="8.4" rx="1.6" ry="1.3"/></g><ellipse cx="5.7" cy="1.8" rx="1.35" ry="1.35" fill="#8c8c00"/><ellipse cx="9.5" cy="1.8" rx="1.35" ry="1.35" fill="#a800a8"/><ellipse cx="1.35" cy="6.5" rx="1.35" ry="1.6" fill="#b000b0"/><ellipse cx="4.8" cy="6.5" rx="1.6" ry="1.1" fill="#00b020"/><ellipse cx="9.8" cy="7.9" rx="1.6" ry="1.3" fill="#009090"/></svg><span class="tx t" style="left:59.60px;top:0.30px;font-size:8.7px;color:#0c0c0c;transform:scaleX(0.908);">PróximasFolgas_Outros</span></div>
<div class="r" style="top:493.89px"><i class="h"></i><svg class="ic" style="top:0.6px" viewBox="0 0 12 12"><path d="M1.4 6.5L5.8 1.8M1.4 6.5L5 6.5M5 6.5L9.6 1.8M5 6.5L10 7.9" stroke="#2a2a2a" stroke-width="0.85" fill="none"/><g fill="#000"><ellipse cx="6.2" cy="2.3" rx="1.4" ry="1.4"/><ellipse cx="10" cy="2.3" rx="1.4" ry="1.4"/><ellipse cx="1.8" cy="7" rx="1.4" ry="1.6"/><ellipse cx="5.3" cy="7" rx="1.6" ry="1.1"/><ellipse cx="10.3" cy="8.4" rx="1.6" ry="1.3"/></g><ellipse cx="5.7" cy="1.8" rx="1.35" ry="1.35" fill="#8c8c00"/><ellipse cx="9.5" cy="1.8" rx="1.35" ry="1.35" fill="#a800a8"/><ellipse cx="1.35" cy="6.5" rx="1.35" ry="1.6" fill="#b000b0"/><ellipse cx="4.8" cy="6.5" rx="1.6" ry="1.1" fill="#00b020"/><ellipse cx="9.8" cy="7.9" rx="1.6" ry="1.3" fill="#009090"/></svg><span class="tx t" style="left:59.60px;top:0.30px;font-size:8.7px;color:#0c0c0c;transform:scaleX(0.908);">PróximasFolgas_Patrulhas</span></div>
<div class="r" style="top:505.82px"><i class="h"></i><svg class="ic" style="top:0.6px" viewBox="0 0 12 12"><path d="M1.4 6.5L5.8 1.8M1.4 6.5L5 6.5M5 6.5L9.6 1.8M5 6.5L10 7.9" stroke="#2a2a2a" stroke-width="0.85" fill="none"/><g fill="#000"><ellipse cx="6.2" cy="2.3" rx="1.4" ry="1.4"/><ellipse cx="10" cy="2.3" rx="1.4" ry="1.4"/><ellipse cx="1.8" cy="7" rx="1.4" ry="1.6"/><ellipse cx="5.3" cy="7" rx="1.6" ry="1.1"/><ellipse cx="10.3" cy="8.4" rx="1.6" ry="1.3"/></g><ellipse cx="5.7" cy="1.8" rx="1.35" ry="1.35" fill="#8c8c00"/><ellipse cx="9.5" cy="1.8" rx="1.35" ry="1.35" fill="#a800a8"/><ellipse cx="1.35" cy="6.5" rx="1.35" ry="1.6" fill="#b000b0"/><ellipse cx="4.8" cy="6.5" rx="1.6" ry="1.1" fill="#00b020"/><ellipse cx="9.8" cy="7.9" rx="1.6" ry="1.3" fill="#009090"/></svg><span class="tx t" style="left:59.60px;top:0.30px;font-size:8.7px;color:#0c0c0c;transform:scaleX(0.908);">ReporDadosFilterBoxes1</span></div>
<div class="r" style="top:517.75px"><i class="h"></i><svg class="ic" style="top:0.6px" viewBox="0 0 12 12"><path d="M1.4 6.5L5.8 1.8M1.4 6.5L5 6.5M5 6.5L9.6 1.8M5 6.5L10 7.9" stroke="#2a2a2a" stroke-width="0.85" fill="none"/><g fill="#000"><ellipse cx="6.2" cy="2.3" rx="1.4" ry="1.4"/><ellipse cx="10" cy="2.3" rx="1.4" ry="1.4"/><ellipse cx="1.8" cy="7" rx="1.4" ry="1.6"/><ellipse cx="5.3" cy="7" rx="1.6" ry="1.1"/><ellipse cx="10.3" cy="8.4" rx="1.6" ry="1.3"/></g><ellipse cx="5.7" cy="1.8" rx="1.35" ry="1.35" fill="#8c8c00"/><ellipse cx="9.5" cy="1.8" rx="1.35" ry="1.35" fill="#a800a8"/><ellipse cx="1.35" cy="6.5" rx="1.35" ry="1.6" fill="#b000b0"/><ellipse cx="4.8" cy="6.5" rx="1.6" ry="1.1" fill="#00b020"/><ellipse cx="9.8" cy="7.9" rx="1.6" ry="1.3" fill="#009090"/></svg><span class="tx t" style="left:59.60px;top:0.30px;font-size:8.7px;color:#0c0c0c;transform:scaleX(0.908);">ReporDadosFilterBoxes2</span></div>
</div>
<div id="sb"></div>
<svg style="position:absolute;left:245.4px;top:44.6px;width:6px;height:4px" viewBox="0 0 6 4"><path d="M0.5 3.5L3 1l2.5 2.5" stroke="#505050" stroke-width="1.4" fill="none"/></svg>
<svg style="position:absolute;left:245.4px;top:512.6px;width:6px;height:4px" viewBox="0 0 6 4"><path d="M0.5 0.5L3 3l2.5-2.5" stroke="#505050" stroke-width="1.4" fill="none"/></svg>
<div id="th"></div>
<div id="t2"></div>
<span class="tx" style="left:1.40px;top:527.40px;font-size:9.1px;color:#10101c;transform:scaleX(0.9525);">Properties - CopiarRegistos</span>
<div class="x" style="left:240px;top:527.2px"><svg viewBox="0 0 10 10"><path d="M1 1L9 9M9 1L1 9" stroke="#000" stroke-width="1.8" fill="none"/></svg></div>
<div id="cb"><div class="dd" style="left:237.6px;top:0.2px;width:12.8px;height:11.8px"></div></div>
<span class="tx" style="left:4.00px;top:548.00px;font-size:8.5px;font-weight:bold;color:#000;transform:scaleX(0.9948);">CopiarRegistos</span>
<span class="tx" style="left:70.00px;top:548.00px;font-size:8.7px;color:#111;transform:scaleX(0.9123);">Module</span>

<div style="left:2px;top:561.6px;width:47.6px;height:17px;background:#f0f0f0;border-top:1px solid #fff;border-left:1px solid #fff;border-right:1.7px solid #5c5c5c"></div>
<span class="tx" style="left:6.50px;top:563.60px;font-size:8.7px;color:#1a1a1a;transform:scaleX(0.9241);">Alphabetic</span>
<div style="left:50px;top:563.4px;width:50.6px;height:14px;border-top:1px solid #fff;border-right:1.7px solid #5c5c5c"></div>
<span class="tx" style="left:52.50px;top:564.80px;font-size:8.7px;color:#1a1a1a;transform:scaleX(0.9283);">Categorized</span>
<div style="left:2.6px;top:577.6px;width:253px;height:24px;border-top:1px solid #fff;border-left:1px solid #fff;border-right:1px solid #a0a0a0"></div>
<div style="left:3.8px;top:577.6px;width:249.8px;height:24px;background:#fff;border-top:2.2px solid #6a6a6a;border-left:2.2px solid #6a6a6a;border-right:1.2px solid #8a8a8a"></div>
<i style="left:6px;top:591.4px;width:246px;height:1px;background:#dcdcdc"></i>
<i style="left:34px;top:580px;width:1px;height:11.6px;background:#dcdcdc"></i>
<span class="tx" style="left:6.50px;top:581.00px;font-size:8.7px;color:#1a1a1a;transform:scaleX(0.8630);">(Name)</span>
<span class="tx" style="left:36.00px;top:581.00px;font-size:8.7px;color:#1a1a1a;transform:scaleX(0.9090);">CopiarRegistos</span>

<div style="left:255px;top:0;width:1.2px;height:600px;background:#fafafa"></div>
<div style="left:260.1px;top:0;width:2.5px;height:600px;background:linear-gradient(90deg,#b4b4b4,#707070)"></div>
<div style="left:260.4px;top:1.3px;width:680px;height:1px;background:#9a9a9a"></div>
<div style="left:262.6px;top:2.6px;width:680px;height:1px;background:#fff"></div>
<div style="left:269.6px;top:4.4px;width:481.6px;height:14.4px;background:#fff;border-top:1.2px solid #808080;border-left:1.6px solid #808080;border-bottom:1px solid #fbfbfb">
 <div class="dd" style="left:467.6px;top:-0.3px;width:12.4px;height:13.2px"></div>
</div>
<span class="tx" style="left:272.30px;top:5.50px;font-size:8.2px;font-weight:bold;color:#000;transform:scaleX(1.0542);">(General)</span>
<div style="left:760px;top:4.4px;width:190px;height:14.4px;background:#fff;border-top:1.2px solid #808080;border-left:1.6px solid #808080;border-bottom:1px solid #fbfbfb"></div>
<span class="tx" style="left:763.10px;top:5.50px;font-size:8.2px;font-weight:bold;color:#000;transform:scaleX(1.0459);">apagar_registo</span>
<div style="left:262.6px;top:21.4px;width:680px;height:1.2px;background:#7e7e7e"></div>
<div style="left:262.8px;top:22.6px;width:15.4px;height:578px;background:#efefef"></div>
<div style="left:278.2px;top:22.6px;width:1px;height:578px;background:#5a5a5a"></div>
<div id="code"></div>
<div class="sep" style="top:226.7px"></div>
<div class="sep" style="top:380.7px"></div>
<div class="cl" style="top:25.50px"><b>Sub</b> Copy_to_next_Available()</div>
<div class="cl" style="top:37.43px">    Application.ScreenUpdating = <b>False</b></div>
<div class="cl" style="top:49.36px">        <b>Select</b> <b>Case</b> UCase(Range("m16").Value)</div>
<div class="cl" style="top:61.29px">            <b>Case</b> "0"</div>
<div class="cl" style="top:73.22px">            <b>Call</b> PassaParaCima</div>
<div class="cl" style="top:85.15px">        <b>End</b> <b>Select</b></div>
<div class="cl" style="top:97.08px">    Sheets("Previsão").Select</div>
<div class="cl" style="top:109.01px">    Range("de5:dn9").Select</div>
<div class="cl" style="top:120.94px">    Selection.Copy</div>
<div class="cl" style="top:132.87px">    Sheets("Gravação").Select</div>
<div class="cl" style="top:144.80px">    Range("a" &amp; Rows.Count).End(xlUp).Offset(1, 0).Select</div>
<div class="cl" style="top:156.73px">    Selection.PasteSpecial Paste:=xlPasteValues, Operation:=xlNone, SkipBlanks _</div>
<div class="cl" style="top:168.66px">        :=<b>False</b>, Transpose:=<b>False</b></div>
<div class="cl" style="top:180.59px">    Application.CutCopyMode = <b>False</b></div>
<div class="cl" style="top:192.52px">    Application.ScreenUpdating = <b>True</b></div>
<div class="cl" style="top:204.45px">    Range("a1").Select</div>
<div class="cl" style="top:216.38px"><b>End</b> <b>Sub</b></div>
<div class="cl" style="top:228.31px"><b>Sub</b> ApagarÚltimoRegisto()</div>
<div class="cl" style="top:240.24px">    Sheets("Gravação").Select</div>
<div class="cl" style="top:252.17px">    <b>On</b> <b>Error</b> <b>Resume</b> <b>Next</b></div>
<div class="cl" style="top:264.10px">    ActiveSheet.Unprotect</div>
<div class="cl" style="top:276.03px">    Range("a158:j162").Select</div>
<div class="cl" style="top:287.96px">    Selection.Copy</div>
<div class="cl" style="top:299.89px">    Range("a" &amp; Rows.Count).End(xlUp).Offset(-4, 0).Select</div>
<div class="cl" style="top:311.82px">    Selection.PasteSpecial Paste:=xlPasteValues, Operation:=xlNone, SkipBlanks _</div>
<div class="cl" style="top:323.75px">        :=<b>False</b>, Transpose:=<b>False</b></div>
<div class="cl" style="top:335.68px">    Application.CutCopyMode = <b>False</b></div>
<div class="cl" style="top:347.61px">    Range("a1").Select</div>
<div class="cl" style="top:359.54px">    ActiveSheet.Protect "", UserInterfaceOnly = <b>True</b></div>
<div class="cl" style="top:371.47px"><b>End</b> <b>Sub</b></div>
<div class="cl" style="top:383.40px"><b>Sub</b> apagar_registo()</div>
<div class="cl" style="top:395.33px">    ActiveSheet.Unprotect</div>
<div class="cl" style="top:407.26px">    <b>On</b> <b>Error</b> <b>Resume</b> <b>Next</b></div>
<div class="cl" style="top:419.19px">    Application.ScreenUpdating = <b>False</b></div>
<div class="cl" style="top:431.12px">        resposta = MsgBox("Todos os dados serão apagados." _</div>
<div class="cl" style="top:443.05px">           &amp; vbCrLf &amp; "Continuar?" _</div>
<div class="cl" style="top:454.98px">           , vbQuestion + vbYesNo, "Gestor de Escalas")</div>
<div class="cl" style="top:466.91px">    <b>If</b> resposta = vbNo <b>Then</b> <b>End</b></div>
<div class="cl" style="top:478.84px">    <b>If</b> resposta = vbYes <b>Then</b></div>
<div class="cl" style="top:490.77px">    Range("A3:j157").Select</div>
<div class="cl" style="top:502.70px">    Selection.ClearContents</div>
<div class="cl" style="top:514.63px">    Range("A1").Select</div>
<div class="cl" style="top:526.56px">    <b>End</b> <b>If</b></div>
<div class="cl" style="top:538.49px">    ActiveSheet.Protect "", UserInterfaceOnly = <b>True</b></div>
<div class="cl" style="top:550.42px">    Application.ScreenUpdating = <b>True</b></div>
<div class="cl" style="top:574.28px"><b>End</b> <b>Sub</b></div>
</body></html>
